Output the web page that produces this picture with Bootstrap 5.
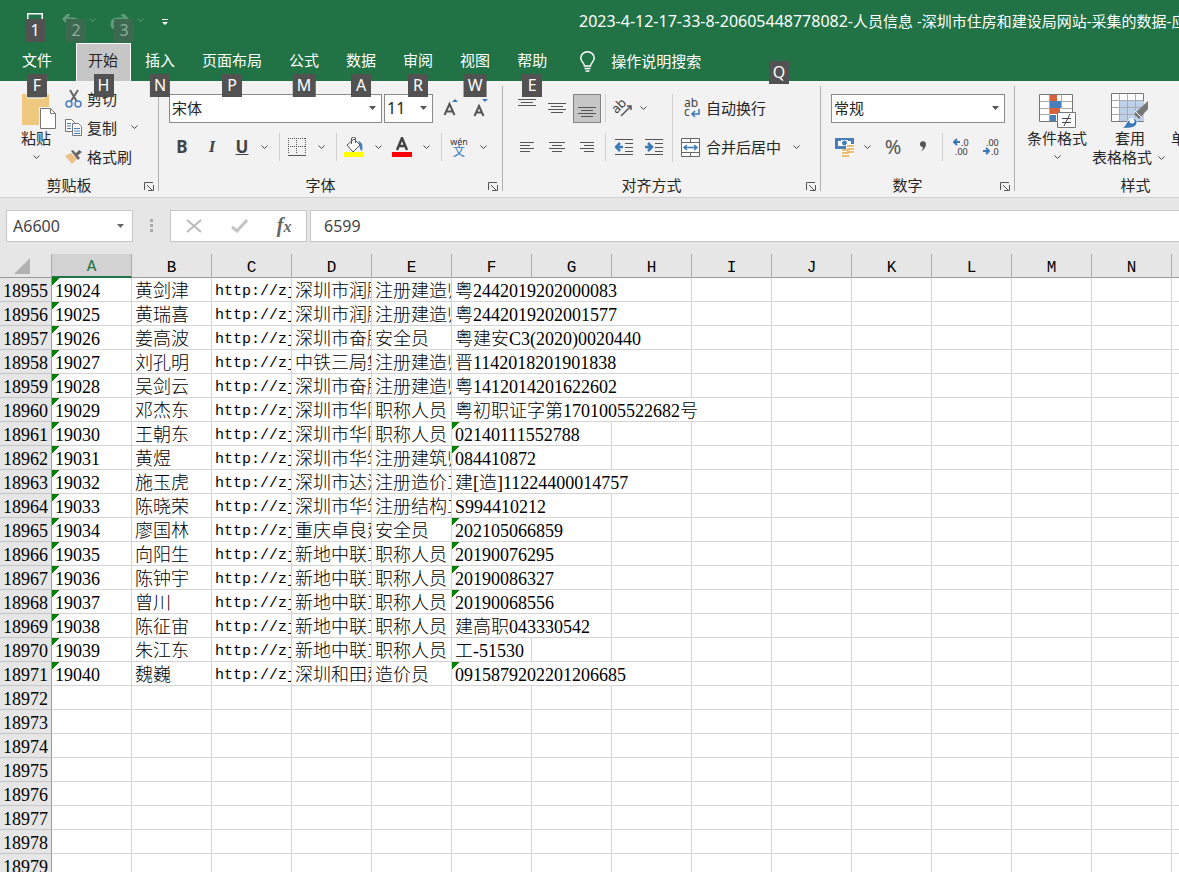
<!DOCTYPE html>
<html lang="zh-CN">
<head>
<meta charset="utf-8">
<meta name="viewport" content="width=device-width, initial-scale=1">
<title>人员信息</title>
<link href="https://cdn.jsdelivr.net/npm/bootstrap@5.3.0/dist/css/bootstrap.min.css" rel="stylesheet">
<style>
:root { --green:#217346; --ui:"Noto Sans","Noto Sans CJK SC",sans-serif; }
body { font-family:var(--ui); font-size:15px; line-height:20px; color:#262626; background:#fff; }
svg { display:block; flex:none; }
button { font:inherit; color:inherit; background:none; border:0; padding:0; }
.latin { font-size:16px; }

/* Title bar and tabs */
.titlebar { background:var(--green); color:#fff; }
.qat { height:43px; }
.qat button { position:relative; height:43px; display:flex; align-items:center; justify-content:center; }
.qat .undo { width:32px; }
.qat .list { width:0; color:#5f9d7a; align-items:flex-start; padding-top:18px; }
.doc-title { left:579px; top:11px; }
.keytip { position:absolute; left:50%; top:31px; transform:translateX(-50%); z-index:5; min-width:20px; height:23px; padding:0 4px; background:#525252; color:#fff; font-size:16px; line-height:23px; text-align:center; }
.qat .keytip { top:19px; }
.qat .faded { background:#3d6850; color:#8fae9c; }
.tabs { height:38px; }
.tabs .tab { position:relative; height:38px; padding:0 13px; margin-right:1px; line-height:34px; color:#fff; text-decoration:none; white-space:nowrap; }
.tabs .tab-file { margin-left:9px; margin-right:11px; }
.tabs .tab-on { background:#c6c6c6; color:#262626; padding-left:12px; box-shadow:inset 0 1px #fff, inset 1px 0 #fff, inset -1px 0 #fff; }
.tell { position:relative; margin-left:19px; gap:16px; width:209px; }
.tabs .tell { padding-bottom:2px; }
.tell .keytip { left:auto; right:0; top:18px; transform:none; }

/* Ribbon */
.ribbon { background:#f2f2f2; height:117px; border-bottom:1px solid #d0d0d0; }
.grp { position:relative; flex:none; height:105px; margin-top:5px; border-right:1px solid #b1b1b1; display:flex; flex-direction:column; }
.grp-body { height:89px; flex:none; }
.grp-name { margin-right:20px; text-align:center; height:20px; line-height:20px; flex:none; }
.launch { position:absolute; right:4px; bottom:0; }
.w-clip { width:159px; } .w-font { width:344px; } .w-align { width:318px; } .w-num { width:194px; } .w-style { width:262px; }
.line1, .line2 { display:flex; align-items:center; height:30px; }
.line1 { margin-top:7px; } .line2 { margin-top:9px; }
.ib { width:30px; height:28px; flex:none; display:flex; align-items:center; justify-content:center; }
.ib-wide { width:34px; }
.ib-slim { width:26px; }
.ch { width:14px; height:28px; flex:none; display:flex; align-items:center; justify-content:center; color:#444; }
.rule { width:1px; height:28px; background:#d0d0d0; flex:none; margin-left:8px; }
.rule-tall { height:68px; margin:8px 8px 0 3px; }
.glyph { font-weight:700; font-size:17px; color:#444; }
.pick { appearance:none; height:29px; border:1px solid #8a8a8a; border-radius:0; padding:0 2px; color:#262626; background:#fff url("data:image/svg+xml,%3Csvg xmlns='http://www.w3.org/2000/svg' width='7' height='4'%3E%3Cpath d='M0 0h7L3.500 4z' fill='%23555'/%3E%3C/svg%3E") no-repeat right 5px center; }
.on { width:28px; height:29px; background:#c6c6c6; border:1px solid #848484; margin:0 4px 0 1px; }
.cmd { display:flex; align-items:center; height:29px; white-space:nowrap; }
.clip-list { margin-top:-2px; }
.clip-list .cmd > svg { margin:0 5px 0 3px; }
.big { display:flex; flex-direction:column; align-items:center; justify-content:flex-start; line-height:19px; white-space:nowrap; flex:none; margin-top:7px; }

/* Formula bar */
.fbar { background:#e6e6e6; height:56px; padding:12px 0 12px 6px; }
.fbox { height:32px; background:#fff; border:1px solid #c6c6c6; color:#444; font-size:16px; }
.namebox { width:127px; }
.fbox input { border:0; outline:0; background:none; color:#444; width:100%; padding:0 6px; }
.fbtns { width:137px; }

/* Sheet */
.sheet { min-height:0; background:#fff; }
.cells { table-layout:fixed; width:0; border-collapse:separate; border-spacing:0; font-family:"Liberation Serif","Noto Sans CJK SC",serif; font-size:18px; font-weight:300; color:#000; line-height:19px; }
.cells col { width:80px; } .cells col.nums { width:52px; }
.cells th, .cells td { height:24px; padding:4px 3px 0; overflow:hidden; white-space:nowrap; font-weight:300; }
.cells td { border-right:1px solid #d4d4d4; border-bottom:1px solid #d4d4d4; }
.cells th { background:#e6e6e6; text-align:center; }
.cells thead th { font-family:"Liberation Mono",monospace; font-size:16px; border-right:1px solid #ababab; border-bottom:1px solid #9b9b9b; padding-top:4px; line-height:18px; }
.cells thead .sel { background:#d2d2d2; color:var(--green); border-bottom:2px solid var(--green); }
.cells tbody th { border-right:1px solid #9b9b9b; border-bottom:1px solid #c6c6c6; padding:4px 1px 0; }
.cells .mono { font-family:"Liberation Mono",monospace; font-size:15px; }
.cells .flag { background:linear-gradient(135deg,#008000 50%,transparent 50%) 0 0/8px 8px no-repeat; }
</style>
</head>
<body class="vh-100 d-flex flex-column overflow-hidden">
<svg width="0" height="0" class="position-absolute" aria-hidden="true">
  <symbol id="chev" viewBox="0 0 7 4"><path d="M.5.5l3 3 3-3" fill="none" stroke="currentColor"/></symbol>
  <symbol id="launcher" viewBox="0 0 10 9"><path d="M.5 8V.5H9M3 3l5 5M9.500 3v5.500H4" fill="none" stroke="#555"/></symbol>
</svg>

<header class="titlebar position-relative flex-shrink-0">
  <div class="qat d-flex">
    <button style="margin-left:20px;width:30px" aria-label="保存"><svg width="16" height="18" fill="none" stroke="#fff"><path d="M.5 17V.5h15V17" stroke-width="2"/></svg><span class="keytip">1</span></button>
    <button class="undo" style="margin-left:10px" aria-label="撤消"><svg class="me-2" width="20" height="16" fill="none" stroke="#5f9d7a" stroke-width="3"><path d="M2 5h9c4 0 6 2 6 5s-2 4-4 4"/><path d="M7 0L2 5l5 5"/></svg><span class="keytip faded">2</span></button>
    <button class="list" aria-label="撤消列表"><svg width="7" height="4"><use href="#chev"/></svg></button>
    <button class="undo ms-3" aria-label="恢复"><svg class="me-2" width="20" height="16" fill="none" stroke="#5f9d7a" stroke-width="3"><path d="M17 5H8c-4 0-6 2-6 5s2 4 4 4"/><path d="M12 0l5 5-5 5"/></svg><span class="keytip faded">3</span></button>
    <button class="list" aria-label="恢复列表"><svg width="7" height="4"><use href="#chev"/></svg></button>
    <button style="margin-left:18px;width:14px" aria-label="自定义快速访问工具栏"><svg width="6" height="6"><path d="M0 0h6v1H0zM0 3h6L3 6z" fill="#fff"/></svg></button>
  </div>
  <div class="doc-title position-absolute end-0 overflow-hidden text-nowrap"><span class="latin">2023-4-12-17-33-8-20605448778082-</span>人员信息 -深圳市住房和建设局网站-采集的数据-应</div>
  <nav class="tabs d-flex">
    <a href="#" class="tab tab-file">文件<span class="keytip">F</span></a>
    <a href="#" class="tab tab-on">开始<span class="keytip">H</span></a>
    <a href="#" class="tab">插入<span class="keytip">N</span></a>
    <a href="#" class="tab">页面布局<span class="keytip">P</span></a>
    <a href="#" class="tab">公式<span class="keytip">M</span></a>
    <a href="#" class="tab">数据<span class="keytip">A</span></a>
    <a href="#" class="tab">审阅<span class="keytip">R</span></a>
    <a href="#" class="tab">视图<span class="keytip">W</span></a>
    <a href="#" class="tab">帮助<span class="keytip">E</span></a>
    <button class="tell d-flex align-items-center text-nowrap"><svg width="15" height="21" fill="none" stroke="#fff" stroke-width="1.500"><path d="M4.500 15c0-3-3.700-4-3.700-8a6.700 6.200 0 0 1 13.400 0c0 4-3.700 5-3.700 8zM4.500 17.500h6M5.500 20h4"/></svg>操作说明搜索<span class="keytip">Q</span></button>
  </nav>
</header>

<section class="ribbon d-flex flex-shrink-0 overflow-hidden">
  <div class="grp w-clip">
    <div class="grp-body d-flex">
      <button class="big" style="margin-left:20px;margin-right:6px"><svg width="36" height="36"><path d="M2 1h27v31H2z" fill="#edc87e"/><path d="M7 0h17v5H7z" fill="#777" stroke="#fff"/><path d="M19 14h12l5 5v17H19z" fill="#f2f2f2"/><path d="M20.500 15.500h10l5 5v15h-15z" fill="#fff" stroke="#777"/><path d="M30.500 15.500v5h5" fill="none" stroke="#777"/></svg><span class="me-1">粘贴</span><span class="ch me-1" style="height:18px"><svg width="7" height="4"><use href="#chev"/></svg></span></button>
      <div class="clip-list">
        <button class="cmd"><svg width="17" height="19" fill="none"><path d="M5 1l6.500 11M13 1L6 12" stroke="#666" stroke-width="2"/><circle cx="4" cy="15" r="3" stroke="#4a7ebb" stroke-width="1.500"/><circle cx="13" cy="15" r="3" stroke="#4a7ebb" stroke-width="1.500"/></svg>剪切</button>
        <div class="d-flex"><button class="cmd"><svg width="17" height="19" fill="#fff" stroke="#777"><path d="M.5 1.500h6l3 3v9h-9z"/><path d="M2 5.500h4M2 8h4M2 10.500h4" stroke="#4a7ebb"/><path d="M7.500 5.500h6l3 3v9h-9z"/><path d="M9 10.500h6M9 13h6M9 15.500h6" stroke="#4a7ebb"/></svg>复制</button><button class="ch ms-2 ps-1" aria-label="复制选项"><svg width="7" height="4"><use href="#chev"/></svg></button></div>
        <button class="cmd"><svg width="17" height="16"><path d="M0 7l6-3 6 6-5 5z" fill="#edc187"/><path d="M6 2l2-1 7 8-2 2z" fill="#666"/><path d="M10 5l4-4 3 2-5 4z" fill="#666"/></svg>格式刷</button>
      </div>
    </div>
    <div class="grp-name">剪贴板</div><button class="launch" aria-label="剪贴板设置"><svg width="10" height="9"><use href="#launcher"/></svg></button>
  </div>

  <div class="grp w-font">
    <div class="grp-body">
      <div class="line1" style="padding-left:10px">
        <select class="pick" style="width:213px" aria-label="字体"><option>宋体</option></select>
        <select class="pick latin" style="width:49px;margin:0 3px 0 2px" aria-label="字号"><option>11</option></select>
        <button class="ib" aria-label="增大字号"><svg width="16" height="18"><path d="M1.500 16L6.500 5l5 11M3.500 12.500h6" fill="none" stroke="#555" stroke-width="2"/><path d="M9 3l3-3 3 3z" fill="#3a78b8"/></svg></button>
        <button class="ib" aria-label="减小字号"><svg width="16" height="18"><path d="M1.500 17L6 7l4.500 10M3.500 13.500h5" fill="none" stroke="#555" stroke-width="2"/><path d="M9 0h6l-3 3z" fill="#3a78b8"/></svg></button>
      </div>
      <div class="line2 ps-2">
        <button class="ib glyph">B</button><button class="ib glyph fst-italic" style="font-family:'Liberation Serif',serif">I</button><button class="ib glyph text-decoration-underline">U</button><button class="ch" aria-label="下划线选项"><svg width="7" height="4"><use href="#chev"/></svg></button>
        <span class="rule"></span>
        <button class="ib ib-wide" aria-label="边框"><svg width="18" height="18" fill="none" stroke="#555"><path d="M0 .5h18M0 8.500h18M.5 0v16M8.500 0v16M17.500 0v16" stroke-dasharray="1 1"/><path d="M0 17.500h18"/></svg></button><button class="ch" aria-label="边框选项"><svg width="7" height="4"><use href="#chev"/></svg></button>
        <span class="rule"></span>
        <button class="ib ib-wide" aria-label="填充颜色"><svg width="20" height="20"><path d="M3 8l7-6 6 6-7 7z" fill="#fff" stroke="#555"/><path d="M7.500 7V1q2-2 4 0v5" fill="none" stroke="#555"/><path d="M14 4c5 1 5 6 4 10-2-1-3-4-2-6z" fill="#4a7ebb"/><path d="M0 15h20v5H0z" fill="#ff0"/></svg></button><button class="ch" aria-label="填充选项"><svg width="7" height="4"><use href="#chev"/></svg></button>
        <button class="ib ib-wide" aria-label="字体颜色"><svg width="20" height="20"><path d="M5 13L10 1l5 12M7 9h6" fill="none" stroke="#444" stroke-width="2.500"/><path d="M0 15h20v5H0z" fill="#f00"/></svg></button><button class="ch" aria-label="字体颜色选项"><svg width="7" height="4"><use href="#chev"/></svg></button>
        <span class="rule"></span>
        <button class="ib ib-wide flex-column" aria-label="拼音"><span style="font-size:9px;line-height:9px;color:#333">wén</span><span style="font-size:12px;line-height:12px;color:#3a78b8">文</span></button><button class="ch" aria-label="拼音选项"><svg width="7" height="4"><use href="#chev"/></svg></button>
      </div>
    </div>
    <div class="grp-name">字体</div><button class="launch" aria-label="字体设置"><svg width="10" height="9"><use href="#launcher"/></svg></button>
  </div>

  <div class="grp w-align">
    <div class="grp-body d-flex">
      <div style="padding-left:9px">
        <div class="line1">
          <button class="ib" aria-label="顶端对齐"><svg width="18" height="20" stroke="#555"><path d="M0 1.500h18M3 4.500h12M0 7.500h18"/></svg></button>
          <button class="ib" aria-label="垂直居中"><svg width="18" height="20" stroke="#555"><path d="M0 5.500h18M3 8.500h12M0 11.500h18M3 14.500h12"/></svg></button>
          <button class="ib on" aria-label="底端对齐"><svg width="18" height="20" stroke="#555"><path d="M0 9.500h18M3 12.500h12M0 15.500h18M3 18.500h12"/></svg></button>
          <span class="rule m-0"></span>
          <button class="ib ib-slim ms-1" aria-label="方向"><svg width="20" height="18"><text x="0" y="11" transform="rotate(-45 7 9)" font-size="13" fill="#444" font-family="Noto Sans">ab</text><path d="M8 17L18 7M14 7h4v4" fill="none" stroke="#555" stroke-width="1.500"/></svg></button><button class="ch" aria-label="方向选项"><svg width="7" height="4"><use href="#chev"/></svg></button>
        </div>
        <div class="line2">
          <button class="ib" aria-label="左对齐"><svg width="14" height="12" stroke="#555"><path d="M0 1.500h14M0 4.500h10M0 7.500h14M0 10.500h10"/></svg></button>
          <button class="ib" aria-label="居中"><svg width="16" height="12" stroke="#555"><path d="M0 1.500h16M3 4.500h10M0 7.500h16M3 10.500h10"/></svg></button>
          <button class="ib" style="margin-right:3px" aria-label="右对齐"><svg width="14" height="12" stroke="#555"><path d="M0 1.500h14M4 4.500h10M0 7.500h14M4 10.500h10"/></svg></button>
          <span class="rule m-0"></span>
          <button class="ib" style="margin-left:3px" aria-label="减少缩进"><svg width="18" height="16"><path d="M0 .5h18M10 4.500h8M10 8.500h8M10 12.500h8M0 15.500h18" stroke="#555"/><path d="M8 8H2M5 4L1 8l4 4" fill="none" stroke="#3a78b8" stroke-width="2.500"/></svg></button>
          <button class="ib" aria-label="增加缩进"><svg width="18" height="16"><path d="M0 .5h18M10 4.500h8M10 8.500h8M10 12.500h8M0 15.500h18" stroke="#555"/><path d="M0 8h6M3 4l4 4-4 4" fill="none" stroke="#3a78b8" stroke-width="2.500"/></svg></button>
        </div>
      </div>
      <span class="rule rule-tall"></span>
      <div>
        <div class="line1"><button class="cmd"><svg style="margin:0 4px 0 1px" width="20" height="20"><text x="2" y="9" font-size="12" fill="#444" font-family="Noto Sans">ab</text><text x="2" y="18" font-size="12" fill="#444" font-family="Noto Sans">c</text><path d="M17 11v5h-6M13 13l-3 3 3 3" fill="none" stroke="#3a78b8" stroke-width="1.500"/></svg>自动换行</button></div>
        <div class="line2"><button class="cmd"><svg style="margin-right:6px" width="19" height="19" fill="#fff" stroke="#666"><path d="M.5.5h18v18H.5zM.5 4.500h18M.5 14.500h18M9.500.5v4M9.500 14.500v4"/><path d="M3 9.500h13M6 7L3 9.500 6 12M13 7l3 2.500-3 2.500" fill="none" stroke="#3a78b8" stroke-width="1.500"/></svg>合并后居中</button><button class="ch ms-2" aria-label="合并选项"><svg width="7" height="4"><use href="#chev"/></svg></button></div>
      </div>
    </div>
    <div class="grp-name">对齐方式</div><button class="launch" aria-label="对齐设置"><svg width="10" height="9"><use href="#launcher"/></svg></button>
  </div>

  <div class="grp w-num">
    <div class="grp-body" style="padding-left:9px">
      <div class="line1"><select class="pick" style="width:174px;margin-left:1px" aria-label="数字格式"><option>常规</option></select></div>
      <div class="line2">
        <button class="ib" aria-label="会计数字格式"><svg width="20" height="20"><path d="M0 1h19v11H0z" fill="#4a7ebb"/><path d="M3 4h3V3h7v1h3v5H3z" fill="#fff"/><circle cx="9.500" cy="6" r="2.500" fill="#4a7ebb"/><path d="M11 7h8v11h-5v2H6v-8h5z" fill="#fff"/><path d="M12 8h7v2h-7zM12 11h7v2h-7zM12 14h7v2h-7zM7 12h7v2H7zM7 15h7v2H7zM7 18h7v2H7z" fill="#e9bd75"/></svg></button><button class="ch" aria-label="会计选项" style="margin-right:4px"><svg width="7" height="4"><use href="#chev"/></svg></button>
        <button class="ib" style="font-size:20px;color:#555">%</button>
        <button class="ib" aria-label="千位分隔"><svg width="8" height="12"><path d="M1 3.500A3 3 0 0 1 7 3c0 3-2 6-5 7 1.500-1.500 2-2.500 2-4C2 6 1 5 1 3.500z" fill="#555"/></svg></button>
        <span class="rule mx-1"></span>
        <button class="ib" aria-label="增加小数位数"><svg width="18" height="20" font-family="Noto Sans" font-size="9" fill="#333"><text x="8" y="9">.0</text><text x="2" y="18">.00</text><path d="M7 5H1M4 2L1 5l3 3" fill="none" stroke="#3a78b8" stroke-width="2"/></svg></button>
        <button class="ib" aria-label="减少小数位数"><svg width="18" height="20" font-family="Noto Sans" font-size="9" fill="#333"><text x="3" y="9">.00</text><text x="8" y="18">.0</text><path d="M0 14h6M3 11l3 3-3 3" fill="none" stroke="#3a78b8" stroke-width="2"/></svg></button>
      </div>
    </div>
    <div class="grp-name">数字</div><button class="launch" aria-label="数字设置"><svg width="10" height="9"><use href="#launcher"/></svg></button>
  </div>

  <div class="grp w-style">
    <div class="grp-body d-flex">
      <button class="big" style="margin-left:12px"><svg width="38" height="36"><path d="M1.500 1.500h33v27h-33z" fill="#fff" stroke="#777"/><path d="M12 2h7v6h-7zM12 15h10v6H12z" fill="#d9603b"/><path d="M12 8h11v7H12zM12 22h6v6h-6z" fill="#4a7ebb"/><path d="M11.500 2v26M23.500 2v13M2 8.500h10M23 8.500h11M2 15.500h10M23 15.500h11M2 21.500h10" stroke="#aaa" fill="none"/><path d="M19.500 19.500h18v15h-18z" fill="#fff" stroke="#777"/><path d="M24 25.500h9M24 29.500h9M32 21l-6 12" stroke="#444"/></svg><span>条件格式</span><span class="ch" style="height:18px"><svg width="7" height="4"><use href="#chev"/></svg></span></button>
      <button class="big" style="margin-left:5px"><svg width="38" height="36"><path d="M.5.5h32v28H.5z" fill="#fff" stroke="#777"/><path d="M9 8h24v20H9z" fill="#bdd1ea"/><path d="M8.500 1v27M16.500 1v27M24.500 1v27M1 7.500h31M1 14.500h31M1 21.500h31" stroke="#aaa"/><path d="M37 8v8L28 26l-5-5z" fill="#777"/><path d="M24 18l6 6" stroke="#fff"/><path d="M10 35c5-1 4-5 8-8 4-4 9-1 8 3-1 5-8 6-16 5z" fill="#3a78b8" stroke="#fff"/><circle cx="21" cy="28" r="2.500" fill="#fff"/></svg><span>套用</span><span class="d-flex align-items-center">表格格式<span class="ch" style="height:18px;margin-left:2px"><svg width="7" height="4"><use href="#chev"/></svg></span></span></button>
      <button class="big pt-4" style="margin-left:3px"><span class="pt-2 mt-1">单元格样式</span></button>
    </div>
    <div class="grp-name">样式</div>
  </div>
</section>

<section class="fbar d-flex flex-shrink-0">
  <div class="fbox namebox d-flex align-items-center"><input aria-label="名称框" value="A6600"><svg class="me-2" width="7" height="4" style="margin-left:-14px"><path d="M0 0h7L3.500 4z" fill="#666"/></svg></div>
  <svg width="4" height="32" style="margin:0 17px 0 16px" fill="#aaa"><path d="M1 9h3v3H1zM1 14h3v3H1zM1 19h3v3H1z"/></svg>
  <div class="fbox fbtns d-flex align-items-center justify-content-around flex-shrink-0">
    <button aria-label="取消"><svg width="16" height="14" stroke="#bbb" stroke-width="2"><path d="M1 1l14 12M15 1L1 13"/></svg></button>
    <button aria-label="输入"><svg width="17" height="14" fill="none" stroke="#c3c3c3" stroke-width="3"><path d="M1 8l5 4L16 1"/></svg></button>
    <button class="fst-italic fw-bold" style="font-family:'Liberation Serif',serif;font-size:20px;color:#666" aria-label="插入函数">f<span class="latin">x</span></button>
  </div>
  <div class="fbox border-end-0 flex-fill d-flex align-items-center" style="margin-left:3px"><input class="ms-1" style="padding-left:9px" aria-label="编辑栏" value="6599"></div>
</section>

<main class="sheet flex-fill overflow-hidden">
  <table class="cells" id="cells"></table>
</main>

<script>
// Each record: name, company, role, certificate, columns the certificate spills over, stored-as-text mark
const records = [
  ["黄剑津","深圳市润腾","注册建造师","粤2442019202000083",3],
  ["黄瑞喜","深圳市润腾","注册建造师","粤2442019202001577",3],
  ["姜高波","深圳市奋腾","安全员","粤建安C3(2020)0020440",3],
  ["刘孔明","中铁三局集","注册建造师","晋1142018201901838",3],
  ["吴剑云","深圳市奋腾","注册建造师","粤1412014201622602",3],
  ["邓杰东","深圳市华阳","职称人员","粤初职证字第1701005522682号",4],
  ["王朝东","深圳市华阳","职称人员","02140111552788",2,1],
  ["黄煜","深圳市华筑","注册建筑师","084410872",2,1],
  ["施玉虎","深圳市达洋","注册造价工","建[造]11224400014757",3],
  ["陈晓荣","深圳市华筑","注册结构工","S994410212",2],
  ["廖国林","重庆卓良建","安全员","202105066859",2,1],
  ["向阳生","新地中联工","职称人员","20190076295",2,1],
  ["陈钟宇","新地中联工","职称人员","20190086327",2,1],
  ["曾川","新地中联工","职称人员","20190068556",2,1],
  ["陈征宙","新地中联工","职称人员","建高职043330542",2],
  ["朱江东","新地中联工","职称人员","工-51530",1],
  ["魏巍","深圳和田建","造价员","0915879202201206685",3,1]
];
const letters = [..."ABCDEFGHIJKLMNOPQRSTUVWXYZ"];
let html = '<colgroup><col class="nums">' + '<col>'.repeat(26) + '</colgroup><thead><tr><th class="p-0" aria-label="全选"><svg class="ms-auto" style="margin-right:21px" width="16" height="16"><path d="M16 0v16H0z" fill="#b2b2b2"/></svg></th>'
  + letters.map(l => `<th scope="col"${l === "A" ? ' class="sel"' : ''}>${l}</th>`).join("") + '</tr></thead><tbody>';
for (let i = 0; i < 40; i++) {
  html += `<tr><th scope="row">${18955 + i}</th>`;
  const r = records[i];
  if (r) {
    html += `<td class="flag">${19024 + i}</td><td>${r[0]}</td><td class="mono">http://zj</td><td>${r[1]}</td><td>${r[2]}</td>`
      + `<td colspan="${r[4]}"${r[5] ? ' class="flag"' : ''}>${r[3]}</td>` + '<td></td>'.repeat(21 - r[4]);
  } else html += '<td></td>'.repeat(26);
  html += '</tr>';
}
document.getElementById("cells").innerHTML = html + '</tbody>';
</script>
<script src="https://cdn.jsdelivr.net/npm/bootstrap@5.3.0/dist/js/bootstrap.bundle.min.js"></script>
</body>
</html>
